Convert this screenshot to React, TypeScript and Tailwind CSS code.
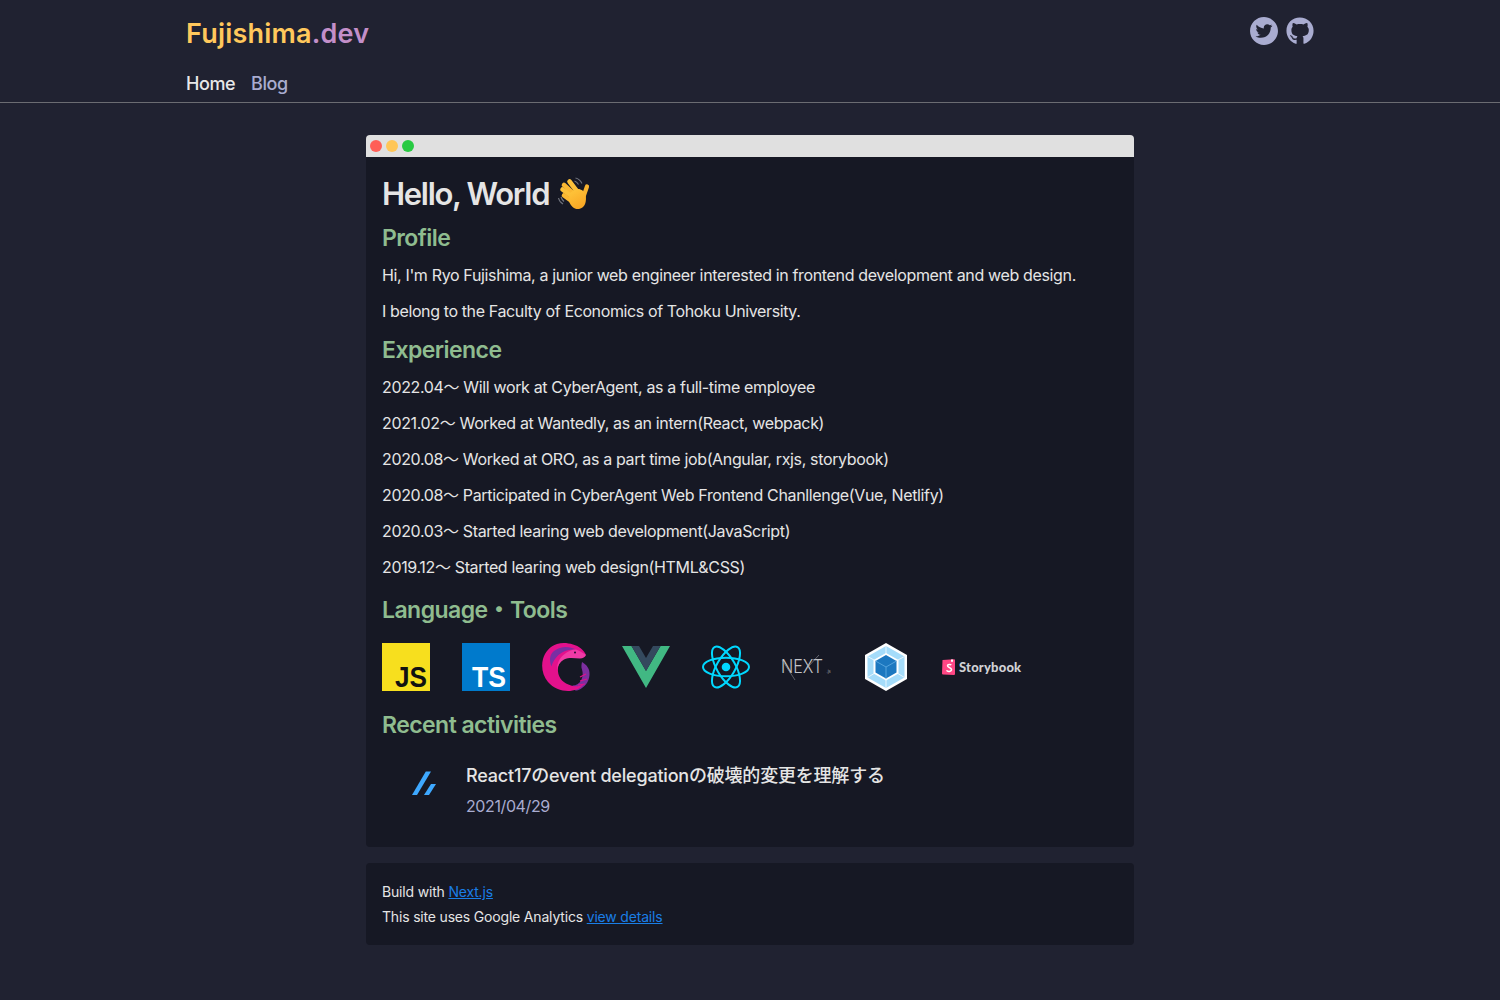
import React from "react";
import { AiFillTwitterCircle } from "react-icons/ai";
import { FaGithub } from "react-icons/fa";

const Wave = () => (
  <svg viewBox="0 0 32 34" className="w-8 h-[34px] ml-[9px] shrink-0" aria-hidden="true">
    <defs>
      <linearGradient id="wv" x1="0" y1="0" x2="0.5" y2="1">
        <stop offset="0" stopColor="#ffc83d" />
        <stop offset="1" stopColor="#f9a825" />
      </linearGradient>
    </defs>
    <path d="M0.500 21c.5 2.500 2 4.500 4.500 6M3 20c.5 2 1.500 3 3 4.500M17.500 1c2.500.5 5 2.500 6.500 5.500M16.500 4c1.500.5 3 1.500 4 3.500" fill="none" stroke="#70737d" strokeWidth="1.100" />
    <g fill="none" stroke="url(#wv)" strokeLinecap="round" strokeWidth="4.600">
      <path d="M21 17 11.500 4.500" stroke="#fcc13a" />
      <path d="M18 19 6 8" stroke="#fbb832" />
      <path d="M16 21 4.500 12.500" stroke="#fcc13a" />
      <path d="M15 25 6 18.500" stroke="#fbb832" />
      <path d="M25 21 29 9.500" stroke="#f9b42f" strokeWidth="4.200" />
    </g>
    <path d="M11 24c-1-5 1-9 6-11.500 5-1.500 9 1 10.500 5.500 1.500 6-.5 13-6.500 14-5 .5-8.500-3-10-8z" fill="url(#wv)" />
  </svg>
);

const Js = () => (
  <svg viewBox="0 0 48 48" className="w-12 h-12 overflow-visible">
    <rect width="48" height="48" fill="#f7df1e" />
    <text x="13" y="44" textLength="32" lengthAdjust="spacingAndGlyphs" fontFamily="'Liberation Sans', sans-serif" fontWeight="700" fontSize="30" fill="#111">JS</text>
  </svg>
);

const Ts = () => (
  <svg viewBox="0 0 48 48" className="w-12 h-12 overflow-visible">
    <rect width="48" height="48" fill="#007acc" />
    <text x="10" y="44" textLength="34" lengthAdjust="spacingAndGlyphs" fontFamily="'Liberation Sans', sans-serif" fontWeight="700" fontSize="30" fill="#fff">TS</text>
  </svg>
);

const Rx = () => (
  <svg viewBox="0 0 48 48" className="w-12 h-12">
    <path d="M40 19c5 3 8 7 7.500 13-.5 7-5 12.500-11 15-1 .5-2 .5-3 .5-2-1-3-3-3-5 4 0 7-2 9-6 1.500-3 1.500-7 .5-10-1-2.500-.5-5 0-7.500z" fill="#7d2fa0" />
    <path d="M44 31l-6 3M45 36l-7 2M43 41l-7 1" stroke="#e0108c" strokeWidth="1.200" />
    <path d="M44 12c-2-5-7-9-13-10.500-5-1.500-11-2-16-.5C8 3 3 9 1 16c-2 8-.5 16 5 23 5 6 13 9 20 9 6 0 12-2 16-7-4 2.500-9 3-13 1.500-7-2-12.500-7-13-14-.5-6 2-11 7-13.500 4-2 8-2.500 12-1 2 .8 4 .8 6-.2 1.500-.8 2.500-1.800 3-2.800z" fill="#e3118c" />
    <path d="M18 5c5-2 11-1 16 1.500-5 0-10 .5-14 3-5 3-9 8-10.500 14C7 17 8 13 10 10c2-2.500 5-4 8-5z" fill="#7a2fa3" />
    <path d="M34 6.500c3 1 6.500 3 10 5.500-1 2-3 3.500-6 3.500-6-.5-11-1.500-16 1-4 2.500-6.500 6-7 11 0-7 2-12 7-16 4-3.500 8-5 12-5z" fill="#f03aa6" />
    <circle cx="33" cy="9.500" r="1" fill="#2a0a30" />
  </svg>
);

const Vue = () => (
  <svg viewBox="0 0 48 48" className="w-12 h-12">
    <polygon points="0,3 9.500,3 24,28 38.500,3 48,3 24,45" fill="#41b883" />
    <polygon points="9.500,3 17,3 24,15 31,3 38.500,3 24,28" fill="#34495e" />
  </svg>
);

const ReactLogo = () => (
  <svg viewBox="0 0 48 48" className="w-12 h-12" fill="none" stroke="#00d8ff" strokeWidth="2">
    <circle cx="24" cy="24" r="4.300" fill="#00d8ff" stroke="none" />
    <ellipse cx="24" cy="24" rx="23" ry="9.300" />
    <ellipse cx="24" cy="24" rx="23" ry="9.300" transform="rotate(60 24 24)" />
    <ellipse cx="24" cy="24" rx="23" ry="9.300" transform="rotate(120 24 24)" />
  </svg>
);

const Next = () => (
  <svg viewBox="0 0 48 48" className="w-12 h-12 overflow-visible">
    <text x="-1" y="30" textLength="42" lengthAdjust="spacingAndGlyphs" fontFamily="Inter, sans-serif" fontSize="18" fontWeight="300" fill="#c4c5c9">NEXT</text>
    <text x="44.500" y="30" fontFamily="Inter, sans-serif" fontSize="4" fill="#a0a2a8">.js</text>
    <path d="M0 17 13 37" stroke="#8a8c92" strokeWidth="0.600" fill="none" />
    <path d="M37 12 25 25" stroke="#9a9ca2" strokeWidth="0.600" fill="none" />
  </svg>
);

const Webpack = () => (
  <svg viewBox="0 0 48 48" className="w-12 h-12">
    <polygon points="24,0 45,12 45,36 24,48 3,36 3,12" fill="#fff" />
    <polygon points="24,3 42.500,13.500 42.500,34.500 24,45 5.500,34.500 5.500,13.500" fill="#a5dcfa" />
    <path d="M5.500 13.500 13 17.500M42.500 13.500 35 17.500M5.500 34.500 13 30M42.500 34.500 35 30M24 45V36M24 3v8" stroke="#e8f6fe" strokeWidth="1" />
    <polygon points="24,10 36.500,17 36.500,30.500 24,37.500 11.500,30.500 11.500,17" fill="#fff" />
    <polygon points="24,12 34.500,18 34.500,29.500 24,35.500 13.500,29.500 13.500,18" fill="#1c78c0" />
    <path d="M13.500 18 24 24l10.500-6M24 24v11.500" stroke="#5ba8e0" strokeWidth="0.900" fill="none" />
  </svg>
);

const Storybook = () => (
  <div className="w-20 h-12 flex items-center gap-[4px]">
    <svg viewBox="0 0 13 16" className="w-[13px] h-4 shrink-0">
      <path d="M0.500 1 12 0.300a1 1 0 0 1 1 1V15a1 1 0 0 1-1 1L1 15.500a1 1 0 0 1-1-1z" fill="#ff4785" />
      <path d="M9 .500V3l1-.6 1 .6V.400z" fill="#fff" />
      <path d="M9.300 6c-.6-.6-3.800-1-3.800.8 0 1.900 4 1.400 4 3.800 0 2.200-3.900 2.300-5 .8" stroke="#fff" strokeWidth="1.500" fill="none" />
    </svg>
    <span className="text-[13px] leading-none font-black tracking-[0.2px] text-[#d0d1d5] font-['Lato',sans-serif]">Storybook</span>
  </div>
);

const Zenn = () => (
  <svg viewBox="0 0 24 24" className="w-6 h-6" fill="#3ea8ff">
    <polygon points="0,24 5,24 19,0.500 13.800,0.500" />
    <polygon points="12,24 17,24 24,13 19,13" />
  </svg>
);

const H2 = ({ children, className }: { children: React.ReactNode; className: string }) => (
  <h2 className={`text-[23px] leading-8 font-semibold text-[#8fbc8f] tracking-[-0.55px] ${className}`}>{children}</h2>
);

const experience = [
  "2022.04〜 Will work at CyberAgent, as a full-time employee",
  "2021.02〜 Worked at Wantedly, as an intern(React, webpack)",
  "2020.08〜 Worked at ORO, as a part time job(Angular, rxjs, storybook)",
  "2020.08〜 Participated in CyberAgent Web Frontend Chanllenge(Vue, Netlify)",
  "2020.03〜 Started learing web development(JavaScript)",
  "2019.12〜 Started learing web design(HTML&CSS)",
];

export default function App() {
  return (
    <div className="min-h-[1000px] bg-[#202231] text-[#e5e5e5] font-['Inter','Noto_Sans_CJK_JP',sans-serif]">
      <header className="h-[103px] border-b border-[#6b6c72]">
        <div className="w-[1128px] mx-auto">
          <div className="flex justify-between">
            <h1 className="mt-[14px] text-[27px] leading-10 font-semibold tracking-[0.2px]">
              <span className="text-[#ffc85c]">Fujishima</span>
              <span className="text-[#c38fc9]">.dev</span>
            </h1>
            <div className="flex gap-2 mt-[17px] text-[#a9acd0]">
              <AiFillTwitterCircle className="w-7 h-7 scale-[1.14]" />
              <FaGithub className="w-7 h-7" />
            </div>
          </div>
          <nav className="flex gap-4 mt-[18px] text-lg leading-6 font-medium tracking-[-0.45px]">
            <a className="text-[#e8e8e8]">Home</a>
            <a className="text-[#a9acd0]">Blog</a>
          </nav>
        </div>
      </header>
      <main className="w-[768px] mx-auto mt-8">
        <div className="h-[22px] bg-[#e0e0e0] rounded-t-[4px] flex items-center gap-1 px-1">
          <span className="w-3 h-3 rounded-full bg-[#ff5f57]" />
          <span className="w-3 h-3 rounded-full bg-[#ffc658]" />
          <span className="w-3 h-3 rounded-full bg-[#28ca42]" />
        </div>
        <section className="bg-[#161824] rounded-b-[4px] px-4 pt-4 h-[690px]">
          <div className="flex items-center h-[42px]">
            <h1 className="text-[31px] leading-[42px] font-semibold tracking-[-1.3px]">Hello, World</h1>
            <Wave />
          </div>
          <H2 className="mt-[7px]">Profile</H2>
          <p className="mt-[9px] leading-6 tracking-[-0.35px]">Hi, I'm Ryo Fujishima, a junior web engineer interested in frontend development and web design.</p>
          <p className="mt-3 leading-6 tracking-[-0.38px]">I belong to the Faculty of Economics of Tohoku University.</p>
          <H2 className="mt-[11px]">Experience</H2>
          <div className="mt-[9px] flex flex-col gap-3">
            {experience.map((e) => (
              <p key={e} className="leading-6 tracking-[-0.35px]">{e}</p>
            ))}
          </div>
          <H2 className="mt-[15px]">Language・Tools</H2>
          <div className="mt-[17px] flex gap-8">
            <Js /><Ts /><Rx /><Vue /><ReactLogo /><Next /><Webpack /><Storybook />
          </div>
          <H2 className="mt-[18px]">Recent activities</H2>
          <div className="mt-[22px] flex">
            <div className="w-[84px] pl-[30px] pt-2"><Zenn /></div>
            <div>
              <div className="text-lg leading-6 font-medium tracking-[-0.2px] h-[24px] mt-px">React17のevent delegationの破壊的変更を理解する</div>
              <div className="mt-[6px] leading-6 text-[#a9acd0] tracking-[-0.4px]">2021/04/29</div>
            </div>
          </div>
        </section>
        <footer className="mt-4 h-[82px] bg-[#161824] rounded-[4px] px-4 pt-4 text-sm tracking-[-0.18px]">
          <p className="leading-[25px] h-[25px]">Build with <a className="text-[#1a7ee6] underline">Next.js</a></p>
          <p className="leading-[25px] h-[25px]">This site uses Google Analytics <a className="text-[#1a7ee6] underline">view details</a></p>
        </footer>
      </main>
    </div>
  );
}
